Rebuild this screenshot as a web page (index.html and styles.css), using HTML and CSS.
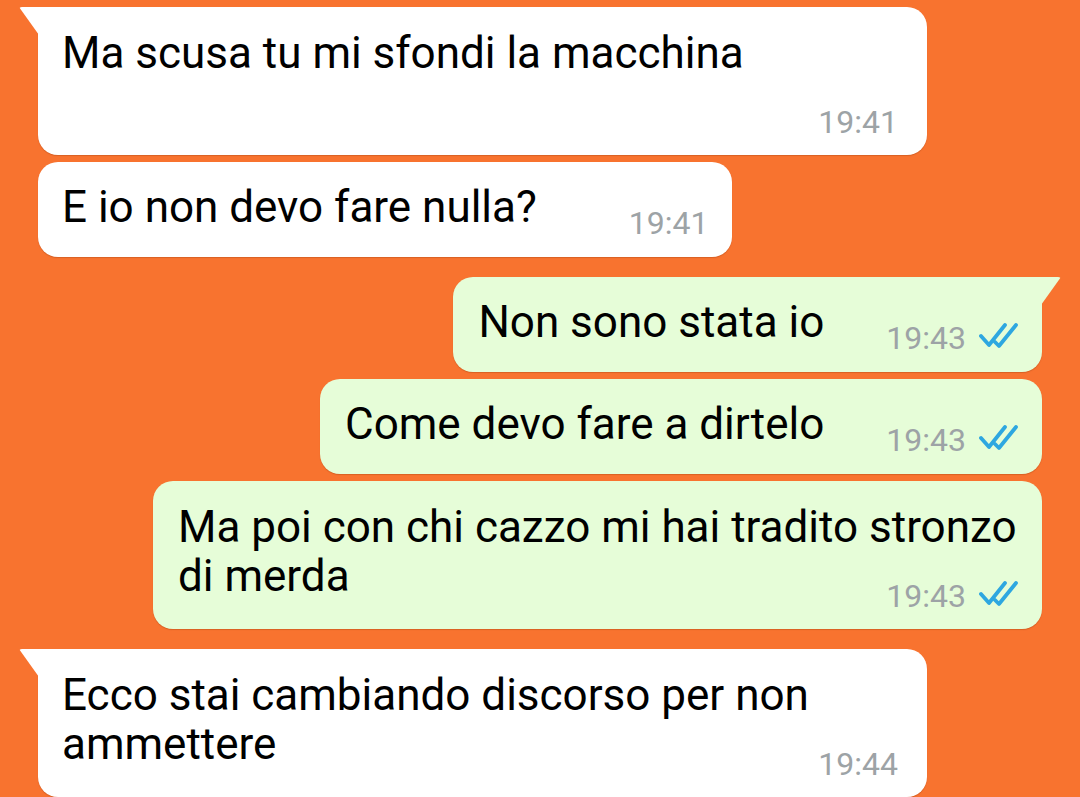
FILE: index.html
```html
<!DOCTYPE html>
<html lang="it">
<head>
    <meta charset="UTF-8">
    <meta name="viewport" content="width=device-width, initial-scale=1.0">
    <title>Chat</title>
    <link rel="stylesheet" href="styles.css">
</head>
<body>
    <div class="chat">
        <!-- Incoming -->
        <div class="row in first">
            <div class="bubble stack tail">
                <div class="text">Ma scusa tu mi sfondi la macchina</div>
                <div class="meta newline"><span class="time">19:41</span></div>
            </div>
        </div>
        <div class="row in">
            <div class="bubble">
                <div class="text">E io non devo fare nulla?</div>
                <div class="meta"><span class="time">19:41</span></div>
            </div>
        </div>

        <!-- Outgoing -->
        <div class="row out first">
            <div class="bubble tail">
                <div class="text">Non sono stata io</div>
                <div class="meta">
                    <span class="time">19:43</span>
                    <svg class="ticks" viewBox="0 0 40 26" width="40" height="26">
                        <path d="M2 13 L10 22 L26 2" />
                        <path d="M16 19 L20 23 L37 2" />
                    </svg>
                </div>
            </div>
        </div>
        <div class="row out">
            <div class="bubble">
                <div class="text">Come devo fare a dirtelo</div>
                <div class="meta">
                    <span class="time">19:43</span>
                    <svg class="ticks" viewBox="0 0 40 26" width="40" height="26">
                        <path d="M2 13 L10 22 L26 2" />
                        <path d="M16 19 L20 23 L37 2" />
                    </svg>
                </div>
            </div>
        </div>
        <div class="row out">
            <div class="bubble stack">
                <div class="text">Ma poi con chi cazzo mi hai tradito stronzo<br>di merda</div>
                <div class="meta">
                    <span class="time">19:43</span>
                    <svg class="ticks" viewBox="0 0 40 26" width="40" height="26">
                        <path d="M2 13 L10 22 L26 2" />
                        <path d="M16 19 L20 23 L37 2" />
                    </svg>
                </div>
            </div>
        </div>

        <!-- Incoming -->
        <div class="row in first">
            <div class="bubble stack tail">
                <div class="text">Ecco stai cambiando discorso per non<br>ammettere</div>
                <div class="meta"><span class="time">19:44</span></div>
            </div>
        </div>
    </div>
</body>
</html>
```

FILE: styles.css
```css
body, html {
    margin: 0;
    padding: 0;
    height: 100%;
    overflow: hidden;
}

body {
    background: #f8732f;
    font-family: Roboto, "Noto Sans", sans-serif;
    color: #000;
}

.chat {
    display: flex;
    flex-direction: column;
    gap: 7px;
    padding: 0 38px;
}

.row {
    display: flex;
}

.row.in {
    justify-content: flex-start;
}

.row.out {
    justify-content: flex-end;
}

.row.first {
    margin-top: 13px;
}

.row.first:first-child {
    margin-top: 7px;
}

/* Bubble */
.bubble {
    position: relative;
    display: flex;
    align-items: flex-start;
    padding: 21px 24px 16px 24px;
    border-radius: 20px;
    background: #ffffff;
    box-shadow: 0 1px 1px rgba(120, 40, 0, 0.25);
    box-sizing: border-box;
}

.row.out .bubble {
    background: #e6fdd8;
    padding-left: 25px;
    padding-right: 23px;
}

.text {
    font-size: 44px;
    line-height: 49px;
    white-space: nowrap;
}

.meta {
    display: flex;
    align-items: center;
    margin-top: 22px;
    margin-left: 92px;
    height: 36px;
}

.row.out .meta {
    margin-left: 62px;
}

.time {
    font-size: 32px;
    line-height: 36px;
    color: #9da3a6;
}

.ticks {
    margin-left: 13px;
    margin-top: -5px;
    fill: none;
    stroke: #2ea7e0;
    stroke-width: 3.8;
    stroke-linecap: round;
    stroke-linejoin: round;
}

/* Multi-line bubbles: time sits under the last line */
.bubble.stack {
    display: block;
    width: 889px;
    padding-top: 22px;
    padding-bottom: 15px;
}

.bubble.stack .meta,
.row.out .bubble.stack .meta {
    justify-content: flex-end;
    margin-left: 0;
    margin-top: -23px;
}

.bubble.stack .meta.newline {
    margin-top: 26px;
}

.row.in .bubble.stack {
    padding-right: 29px;
}

/* Tails */
.bubble.tail {
    border-top-left-radius: 0;
}

.row.out .bubble.tail {
    border-top-left-radius: 20px;
    border-top-right-radius: 0;
}

.bubble.tail::before {
    content: "";
    position: absolute;
    top: 0;
    left: -19px;
    width: 20px;
    height: 28px;
    background: inherit;
    border-top-left-radius: 3px;
    clip-path: polygon(0 0, 100% 0, 100% 100%);
}

.row.out .bubble.tail::before {
    left: auto;
    right: -19px;
    border-top-left-radius: 0;
    border-top-right-radius: 3px;
    clip-path: polygon(0 0, 100% 0, 0 100%);
}
```
